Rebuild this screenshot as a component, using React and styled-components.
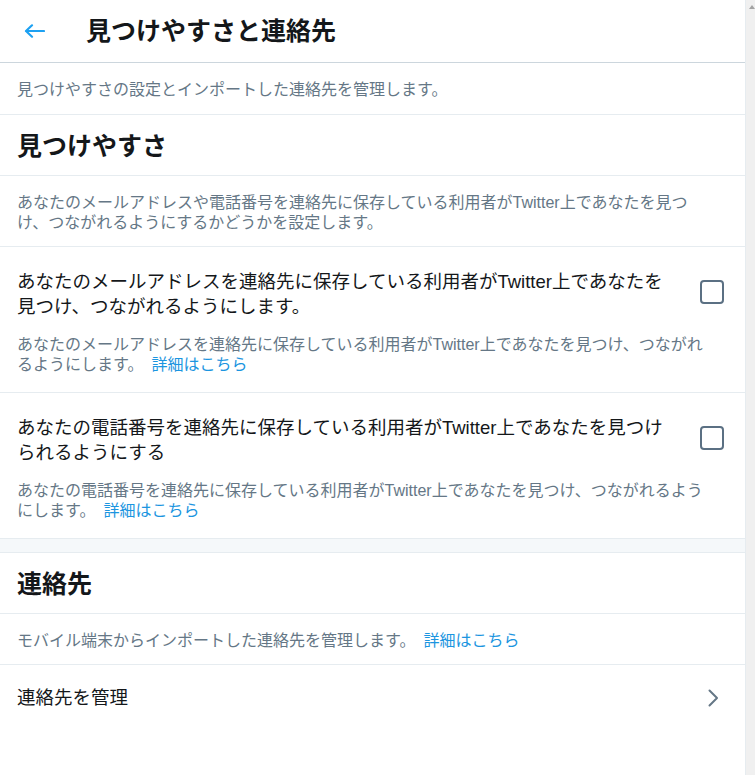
import React from 'react';
import styled, { createGlobalStyle } from 'styled-components';

const GlobalStyle = createGlobalStyle`
  html, body {
    margin: 0;
    padding: 0;
    background: #ffffff;
  }
  body {
    font-family: 'Liberation Sans', 'Noto Sans CJK JP', sans-serif;
    color: #14171a;
  }
  * {
    box-sizing: border-box;
  }
`;

const Page = styled.div`
  display: flex;
  min-height: 775px;
`;

const Main = styled.main`
  width: 746px;
  border-right: 1px solid #e6ecf0;
  background: #ffffff;
`;

const ScrollTrack = styled.div`
  flex: 1;
  background: #f0f0f0;
  display: flex;
  justify-content: flex-end;
  padding-top: 5px;
`;

const Header = styled.header`
  height: 63px;
  display: flex;
  align-items: center;
  gap: 41px;
  padding-left: 24px;
  border-bottom: 1px solid #ccd6dd;
`;

const BackButton = styled.button`
  display: flex;
  align-items: center;
  padding: 0;
  border: none;
  background: transparent;
  cursor: pointer;
`;

const Title = styled.h1`
  margin: 0;
  font-size: 25px;
  line-height: 30px;
  font-weight: 700;
  color: #14171a;
`;

const Note = styled.div`
  padding: ${(p) => (p.$tall ? '17px 17px 14px' : '17px 17px 13px')};
  font-size: 16px;
  line-height: 20px;
  color: #657786;
  border-bottom: 1px solid #e6ecf0;
`;

const SectionTitle = styled.h2`
  margin: 0;
  padding: 16px 17px 14px;
  font-size: 25px;
  line-height: 30px;
  font-weight: 700;
  border-bottom: 1px solid #e6ecf0;
`;

const Item = styled.div`
  padding: 23px 17px 17px;
  border-bottom: 1px solid #e6ecf0;
`;

const ItemRow = styled.label`
  display: flex;
  align-items: flex-start;
  gap: 20px;
  cursor: pointer;
`;

const ItemLabel = styled.span`
  flex: 1;
  min-width: 0;
  font-size: 18.5px;
  line-height: 24.5px;
  color: #14171a;
`;

const Checkbox = styled.span`
  flex: none;
  width: 24px;
  height: 24px;
  margin: 10px 4px 0 0;
  border: 2.5px solid #5b7083;
  border-radius: 4px;
`;

const ItemNote = styled.p`
  margin: 16px 0 0;
  font-size: 16px;
  line-height: 20px;
  color: #657786;
`;

const Link = styled.a`
  margin-left: 8px;
  color: #1b95e0;
  text-decoration: none;
  cursor: pointer;
`;

const Spacer = styled.div`
  height: 14px;
  background: #f5f8fa;
  border-bottom: 1px solid #e6ecf0;
`;

const NavRow = styled.div`
  display: flex;
  align-items: center;
  justify-content: space-between;
  padding: 21px 26px 15px 17px;
  font-size: 18.5px;
  line-height: 24px;
  cursor: pointer;
`;

const BackArrow = () => (
  <svg width="21" height="14" viewBox="0 0 21 14" fill="none">
    <path d="M20 7H2.5" stroke="#1da1f2" strokeWidth="2.2" strokeLinecap="round" />
    <path d="M8 1.3L2 7l6 5.7" stroke="#1da1f2" strokeWidth="2.2" strokeLinecap="round" strokeLinejoin="round" />
  </svg>
);

const Chevron = () => (
  <svg width="11" height="18" viewBox="0 0 11 18" fill="none">
    <path d="M1.5 1.5L9 9l-7.5 7.5" stroke="#657786" strokeWidth="2" strokeLinecap="round" strokeLinejoin="round" />
  </svg>
);

const UpArrow = () => (
  <svg width="6" height="4" viewBox="0 0 6 4">
    <path d="M0 4L3 0l3 4z" fill="#a3a3a3" />
  </svg>
);

const discoverItems = [
  {
    label: ['あなたのメールアドレスを連絡先に保存している利用者がTwitter上であなたを', '見つけ、つながれるようにします。'],
    note: ['あなたのメールアドレスを連絡先に保存している利用者がTwitter上であなたを見つけ、つながれ', 'るようにします。'],
  },
  {
    label: ['あなたの電話番号を連絡先に保存している利用者がTwitter上であなたを見つけ', 'られるようにする'],
    note: ['あなたの電話番号を連絡先に保存している利用者がTwitter上であなたを見つけ、つながれるよう', 'にします。'],
  },
];

const App = () => {
  return (
    <Page>
      <GlobalStyle />
      <Main>
        <Header>
          <BackButton type="button" aria-label="戻る">
            <BackArrow />
          </BackButton>
          <Title>見つけやすさと連絡先</Title>
        </Header>

        <Note $tall>見つけやすさの設定とインポートした連絡先を管理します。</Note>

        <SectionTitle>見つけやすさ</SectionTitle>
        <Note>
          あなたのメールアドレスや電話番号を連絡先に保存している利用者がTwitter上であなたを見つ
          <br />
          け、つながれるようにするかどうかを設定します。
        </Note>

        {discoverItems.map((item, i) => (
          <Item key={i}>
            <ItemRow>
              <ItemLabel>
                {item.label[0]}
                <br />
                {item.label[1]}
              </ItemLabel>
              <Checkbox />
            </ItemRow>
            <ItemNote>
              {item.note[0]}
              <br />
              {item.note[1]}
              <Link>詳細はこちら</Link>
            </ItemNote>
          </Item>
        ))}

        <Spacer />

        <SectionTitle>連絡先</SectionTitle>
        <Note>
          モバイル端末からインポートした連絡先を管理します。
          <Link>詳細はこちら</Link>
        </Note>

        <NavRow>
          <span>連絡先を管理</span>
          <Chevron />
        </NavRow>
      </Main>
      <ScrollTrack>
        <UpArrow />
      </ScrollTrack>
    </Page>
  );
};

export default App;
